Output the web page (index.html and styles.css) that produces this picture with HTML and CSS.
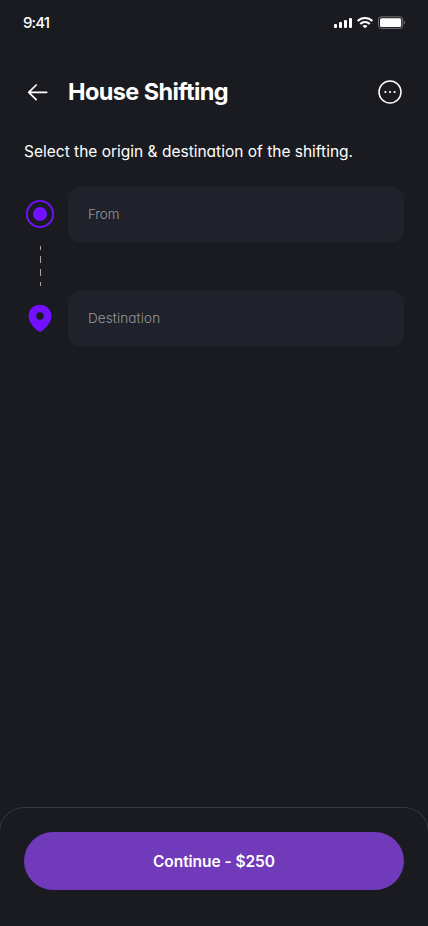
FILE: index.html
```html
<!DOCTYPE html>
<html lang="en">
<head>
<meta charset="utf-8">
<meta name="viewport" content="width=device-width, initial-scale=1">
<title>House Shifting</title>
<link rel="stylesheet" href="styles.css">
</head>
<body>
<main class="screen">
  <div class="status">
    <span class="time">9:41</span>
    <svg class="signals" width="72" height="14" viewBox="0 0 72 14" fill="#fff">
      <rect x="1" y="8" width="3" height="4" rx="1"/>
      <rect x="6" y="6" width="3" height="6" rx="1"/>
      <rect x="11" y="4" width="3" height="8" rx="1"/>
      <rect x="16" y="2" width="3" height="10" rx="1"/>
      <g fill="none" stroke="#fff" stroke-width="2.1"><path d="M24.600 5.100c4.100-4.200 10.700-4.200 14.800 0M27.300 8c2.600-2.600 6.800-2.600 9.400 0"/></g>
      <path d="M29.500 9.900c1.500-1.200 3.500-1.200 5 0L32 12.300z"/>
      <rect x="45.500" y=".8" width="24.200" height="11.600" rx="2.800" fill="none" stroke="#717276"/>
      <rect x="47" y="2.300" width="21.200" height="8.600" rx="1.500"/>
      <path d="M71 4.700c1.400.6 1.400 3.200 0 3.800z" fill="#717276"/>
    </svg>
  </div>
  <header class="header">
    <svg class="back" width="28" height="28" viewBox="0 0 28 28" fill="none" stroke="#fff" stroke-width="1.7" stroke-linecap="round" stroke-linejoin="round"><path d="M22.700 14.300H4.700M12.200 7 4.700 14.300l7.500 7.300"/></svg>
    <h1>House Shifting</h1>
    <svg class="more" width="28" height="28" viewBox="0 0 28 28" fill="none" stroke="#fff" stroke-width="1.5"><circle cx="14" cy="14" r="11"/><g fill="#fff" stroke="none"><circle cx="9.400" cy="14" r="1.100"/><circle cx="14" cy="14" r="1.100"/><circle cx="18.600" cy="14" r="1.100"/></g></svg>
  </header>
  <p class="intro">Select the origin &amp; destination of the shifting.</p>
  <section class="route">
    <div class="markers">
      <svg width="32" height="32" viewBox="0 0 32 32"><circle cx="16" cy="16" r="13.100" fill="none" stroke="#7210ff" stroke-width="1.900"/><circle cx="16" cy="16" r="7" fill="#7210ff"/></svg>
      <svg width="32" height="40" viewBox="0 0 32 40"><path d="M16.500 0v4M16.500 10v7M16.500 23v7M16.500 36v4" stroke="#a5a5a8" stroke-width="1"/></svg>
      <svg width="32" height="32" viewBox="0 0 32 32"><path fill="#7210ff" fill-rule="evenodd" d="M16 2.700c6.300 0 11.400 4.800 11.400 11.300 0 6.900-5.800 12.200-9.900 15.200-1 .7-2 .7-3 0C10.400 26.200 4.600 20.900 4.600 14 4.600 7.500 9.700 2.700 16 2.700zm0 7.500a3.800 3.800 0 1 0 0 7.600 3.800 3.800 0 0 0 0-7.600z"/></svg>
    </div>
    <div class="fields">
      <div class="field"><span class="from">From</span></div>
      <div class="field"><span class="destination">Destination</span></div>
    </div>
  </section>
  <footer class="footer"><button class="continue"><span>Continue - $250</span></button></footer>
</main>
</body>
</html>
```
FILE: styles.css
```css
* { box-sizing: border-box; }
body { margin: 0; background: #1a1b20; }
.screen {
  width: 428px; height: 926px; display: flex; flex-direction: column; overflow: hidden;
  background: #1a1b20; color: #fff;
  font-family: Inter, Lato, sans-serif; font-feature-settings: "cv11";
}
.status { height: 44px; padding: 1px 23px 0; display: flex; align-items: center; justify-content: space-between; }
.time { font-size: 15px; font-weight: 500; letter-spacing: -.9px; }
.signals { margin-right: 0; }
.header { height: 48px; margin: 24px 24px 0; display: flex; align-items: center; }
.back { flex: none; }
h1 { margin: 0 auto 0 16px; font-size: 23.500px; line-height: 28px; font-weight: 650; letter-spacing: -.61px; white-space: nowrap; }
.intro { height: 22px; margin: 25px 24px 0; font-size: 15.500px; line-height: 22px; letter-spacing: 0; white-space: nowrap; }
.route { display: flex; gap: 12px; margin: 23px 24px 0; }
.markers { width: 32px; padding-top: 12px; display: flex; flex-direction: column; gap: 16px; }
.markers svg { display: block; }
.fields { flex: 1; display: grid; gap: 48px; }
.field { height: 56px; padding: 0 20px; border-radius: 12px; background: #1f222a; color: #97989b; display: flex; align-items: center; font-size: 13.500px; font-weight: 300; }
.from { letter-spacing: -.15px; }
.destination { letter-spacing: .12px; }
.footer { height: 119px; margin: auto -1px 0; padding: 24px; border: 1px solid #35383f; border-bottom: 0; border-radius: 25px 25px 0 0; background: #1a1b20; }
.continue { display: block; width: 100%; height: 58px; padding: 2px 0 0; border: 0; border-radius: 29px; background: #703aba; color: #fff; font: 600 15.500px/22px Inter, Lato, sans-serif; font-feature-settings: "cv11"; letter-spacing: -.05px; }
```
